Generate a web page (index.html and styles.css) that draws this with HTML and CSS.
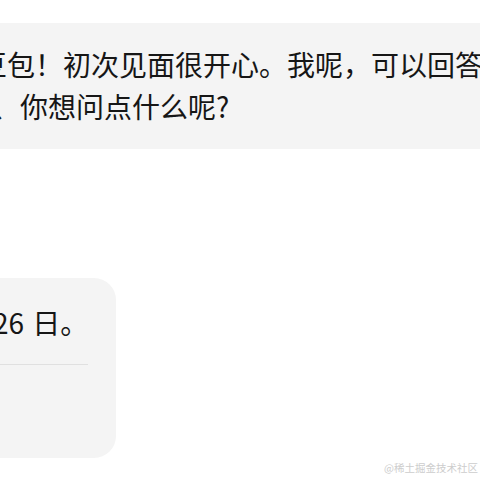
FILE: index.html
```html
<!DOCTYPE html>
<html lang="zh-CN">
<head>
<meta charset="utf-8">
<title>豆包</title>
<link rel="stylesheet" href="styles.css">
</head>
<body>
<div class="chat">
  <div class="bubble bubble-wide">
    <p class="line line-first">你好，我是豆包！初次见面很开心。我呢，可以回答你的各种问题</p>
    <p class="line line-second">写作等、你想问点什么呢?</p>
  </div>
  <div class="bubble bubble-narrow">
    <p class="line line-date">26 日。</p>
    <div class="divider"></div>
    <div class="actions"></div>
  </div>
</div>
<div class="watermark">@稀土掘金技术社区</div>
</body>
</html>
```
FILE: styles.css
```css
html, body {
  margin: 0;
  padding: 0;
  background: #ffffff;
}
body {
  width: 480px;
  height: 480px;
  overflow: hidden;
  position: relative;
  font-family: "Noto Sans CJK SC", "Noto Sans", sans-serif;
  color: #161616;
}
.chat {
  display: flex;
  flex-direction: column;
  align-items: flex-start;
  padding-top: 23px;
}
.bubble {
  background: #f4f4f4;
  box-sizing: border-box;
}
.bubble-wide {
  margin-left: -185px;
  width: 900px;
  padding: 20px 24px 22px 24px;
  border-radius: 22px;
}
.line {
  margin: 0;
  font-size: 28px;
  line-height: 42px;
  white-space: nowrap;
}
.line-second {
  text-indent: 69px;
}
.bubble-narrow {
  margin-top: 129px;
  margin-left: -200px;
  width: 316px;
  height: 180px;
  padding: 23px 28px 0 0;
  border-radius: 22px;
  display: flex;
  flex-direction: column;
}
.line-date {
  padding-left: 193px;
  word-spacing: 2px;
}
.divider {
  margin-top: 21px;
  height: 1px;
  background: #e0e0e0;
}
.actions {
  flex: 1;
}
.watermark {
  position: absolute;
  right: 2px;
  bottom: 5px;
  font-size: 10.5px;
  line-height: 14px;
  color: #cdcdcd;
  font-family: "Noto Sans CJK SC", sans-serif;
}
```
